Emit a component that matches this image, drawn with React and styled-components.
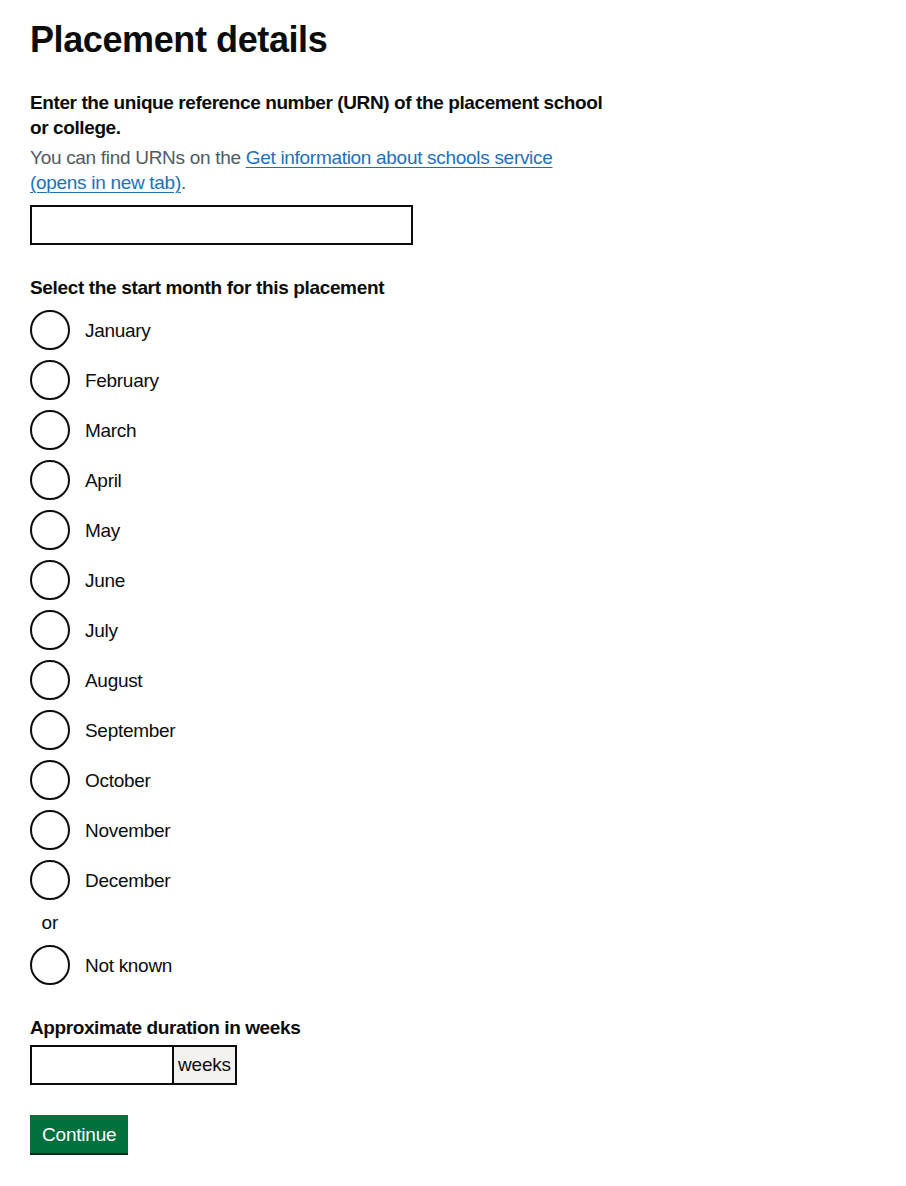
import styled, { createGlobalStyle } from "styled-components";

const GlobalStyle = createGlobalStyle`
  body {
    margin: 0;
    background: #ffffff;
    color: #0b0c0c;
    font-family: "Liberation Sans", Arial, sans-serif;
  }
`;

const Main = styled.main`
  padding: 20px 30px 30px;
`;

const Heading = styled.h1`
  margin: 0 0 30px;
  font-size: 36px;
  line-height: 40px;
  font-weight: 700;
  letter-spacing: -0.4px;
`;

const FormGroup = styled.div`
  margin-bottom: 30px;
  max-width: ${(p) => p.$maxWidth || "none"};
`;

const Label = styled.label`
  display: block;
  margin-bottom: 5px;
  font-size: 19px;
  line-height: 25px;
  font-weight: 700;
  letter-spacing: -0.4px;
`;

const Hint = styled.div`
  max-width: 560px;
  margin-bottom: 10px;
  color: #505a5f;
  font-size: 19px;
  line-height: 25px;
  letter-spacing: -0.3px;
`;

const Link = styled.a`
  color: #1d70b8;
  text-decoration: underline;
  text-decoration-thickness: 1px;
  text-underline-offset: 0.15em;
`;

const TextInput = styled.input`
  box-sizing: border-box;
  width: ${(p) => p.$width};
  height: 40px;
  margin: 0;
  padding: 5px;
  border: 2px solid #0b0c0c;
  border-radius: 0;
  font: inherit;
  font-size: 19px;
  outline: none;
`;

const Fieldset = styled.fieldset`
  margin: 0;
  padding: 0;
  border: 0;
  min-width: 0;
`;

const Legend = styled.legend`
  padding: 0;
  margin-bottom: 10px;
  font-size: 19px;
  line-height: 25px;
  font-weight: 700;
  letter-spacing: -0.35px;
`;

const RadioList = styled.div`
  display: flex;
  flex-direction: column;
  gap: 10px;
`;

const RadioItem = styled.div`
  display: flex;
  align-items: flex-start;
  min-height: 40px;
`;

const RadioInput = styled.input`
  appearance: none;
  flex: none;
  box-sizing: border-box;
  width: 40px;
  height: 40px;
  margin: 0;
  border: 2px solid #0b0c0c;
  border-radius: 50%;
  background: #ffffff;
`;

const RadioLabel = styled.label`
  padding: 8px 15px 5px;
  font-size: 19px;
  line-height: 25px;
  letter-spacing: -0.3px;
`;

const Divider = styled.div`
  width: 40px;
  text-align: center;
  font-size: 19px;
  line-height: 25px;
`;

const InputWrapper = styled.div`
  display: flex;
`;

const Suffix = styled.div`
  box-sizing: border-box;
  height: 40px;
  min-width: 40px;
  padding: 0 4px;
  border: 2px solid #0b0c0c;
  border-left: 0;
  background: #f3f2f1;
  font-size: 19px;
  line-height: 36px;
  letter-spacing: -0.2px;
  text-align: center;
  white-space: nowrap;
`;

const Button = styled.button`
  display: inline-block;
  margin: 0;
  padding: 8px 10px 7px;
  border: 2px solid transparent;
  border-radius: 0;
  background: #00703c;
  box-shadow: 0 2px 0 #002d18;
  color: #ffffff;
  font: inherit;
  font-size: 19px;
  line-height: 19px;
  letter-spacing: -0.2px;
  cursor: pointer;
`;

const months = [
  "January",
  "February",
  "March",
  "April",
  "May",
  "June",
  "July",
  "August",
  "September",
  "October",
  "November",
  "December",
];

const Radio = ({ id, label }) => (
  <RadioItem>
    <RadioInput type="radio" id={id} name="start-month" />
    <RadioLabel htmlFor={id}>{label}</RadioLabel>
  </RadioItem>
);

export default function App() {
  return (
    <>
      <GlobalStyle />
      <Main>
        <Heading>Placement details</Heading>

        <FormGroup $maxWidth="590px">
          <Label htmlFor="urn">
            Enter the unique reference number (URN) of the placement school or college.
          </Label>
          <Hint>
            You can find URNs on the{" "}
            <Link href="#">Get information about schools service (opens in new tab)</Link>.
          </Hint>
          <TextInput id="urn" type="text" $width="383px" />
        </FormGroup>

        <FormGroup>
          <Fieldset>
            <Legend>Select the start month for this placement</Legend>
            <RadioList>
              {months.map((m) => (
                <Radio key={m} id={`month-${m}`} label={m} />
              ))}
              <Divider>or</Divider>
              <Radio id="month-unknown" label="Not known" />
            </RadioList>
          </Fieldset>
        </FormGroup>

        <FormGroup>
          <Label htmlFor="duration">Approximate duration in weeks</Label>
          <InputWrapper>
            <TextInput id="duration" type="text" $width="144px" />
            <Suffix>weeks</Suffix>
          </InputWrapper>
        </FormGroup>

        <Button type="button">Continue</Button>
      </Main>
    </>
  );
}
